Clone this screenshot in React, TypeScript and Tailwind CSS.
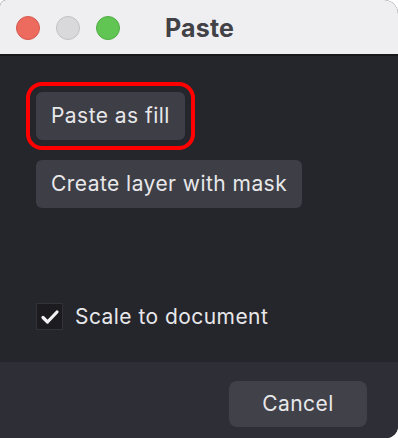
import React from "react";

const font = { fontFamily: "Inter, 'Noto Sans', sans-serif" };

const App = () => {
  return (
    <div
      style={font}
      className="w-[398px] h-[438px] flex flex-col overflow-hidden rounded-tr-[14px] rounded-br-[12px] rounded-tl-[6px] bg-[#25252c]"
    >
      {/* title bar */}
      <div className="h-[56px] shrink-0 flex items-center bg-[#efeff2] border-b-2 border-[#18181c] pl-[16px]">
        <div className="flex gap-[16px] mt-[1px]">
          <span className="w-[24px] h-[24px] rounded-full bg-[#ec6a5e] border border-[#d8574c]" />
          <span className="w-[24px] h-[24px] rounded-full bg-[#d9d9db] border border-[#c2c2c4]" />
          <span className="w-[24px] h-[24px] rounded-full bg-[#61c554] border border-[#50ad44]" />
        </div>
        <div className="ml-[45px] mt-[4px] text-[25px] font-bold text-[#414146] tracking-[0.2px]">
          Paste
        </div>
      </div>
      {/* body */}
      <div className="flex-1 flex flex-col items-start pl-[36px] pt-[36px]">
        <button className="h-[48px] px-[15px] rounded-[6px] bg-[#3e3e46] text-[21px] tracking-[0.45px] text-[#e8e8ea] outline-4 outline-[#ff0000] outline-offset-[6px]">
          Paste as fill
        </button>
        <button className="mt-[20px] h-[48px] px-[15px] rounded-[6px] bg-[#3e3e46] text-[21px] tracking-[0.45px] text-[#e8e8ea]">
          Create layer with mask
        </button>
        <label className="mt-[93px] flex items-center gap-[12px]">
          <span className="w-[27px] h-[27px] flex items-center justify-center bg-[#1b1b20] border border-[#323238]">
            <svg width="20" height="16" viewBox="0 0 20 16" fill="none">
              <path
                d="M3 8.5 L7.5 13 L17 3"
                stroke="#f2f2f4"
                strokeWidth="3.2"
                strokeLinecap="round"
                strokeLinejoin="round"
              />
            </svg>
          </span>
          <span className="text-[21px] tracking-[0.45px] text-[#e8e8ea]">Scale to document</span>
        </label>
      </div>
      {/* footer */}
      <div className="h-[76px] shrink-0 flex items-start justify-end pt-[19px] pr-[31px] bg-[#2e2e36]">
        <button className="w-[138px] h-[46px] rounded-[8px] bg-[#414149] text-[21px] tracking-[0.45px] text-[#e8e8ea]">
          Cancel
        </button>
      </div>
    </div>
  );
};

export default App;
